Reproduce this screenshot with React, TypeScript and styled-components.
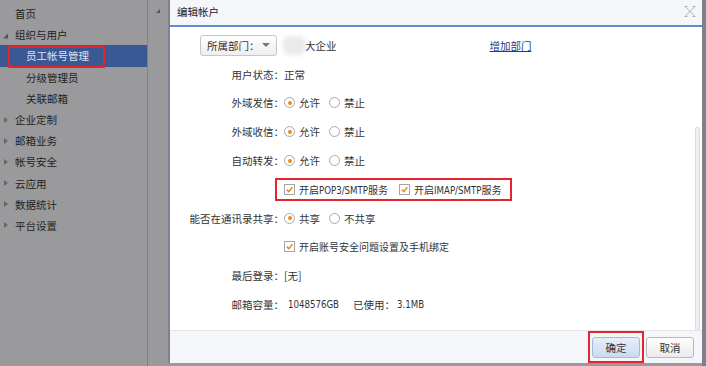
import React from "react";
import styled, { createGlobalStyle } from "styled-components";

const Global = createGlobalStyle`
  html, body { margin: 0; padding: 0; }
  body {
    width: 706px; height: 366px; overflow: hidden;
    font-family: "Noto Sans CJK SC", "Noto Sans", "Liberation Sans", sans-serif;
    font-size: 10.5px; color: #333;
  }
`;

const Page = styled.div`
  position: relative;
  display: flex;
  width: 706px;
  height: 366px;
  background: #999a9c;
  overflow: hidden;
`;

const Sidebar = styled.nav`
  width: 147px;
  border-right: 1px solid #7f8082;
  padding-top: 3px;
  display: flex;
  flex-direction: column;
  background: #9a9a9c;
`;

const NavItem = styled.div<{ $level: number; $active?: boolean }>`
  position: relative;
  height: 21.2px;
  display: flex;
  align-items: center;
  padding-left: ${(p) => (p.$level === 0 ? 15 : 26)}px;
  background: ${(p) => (p.$active ? "#3a5893" : "transparent")};
  color: ${(p) => (p.$active ? "#dfe5f0" : "#222")};
  white-space: nowrap;
`;

const Caret = styled.span<{ $open?: boolean }>`
  position: absolute;
  left: 3px;
  top: 50%;
  transform: translateY(-50%);
  width: 0;
  height: 0;
  ${(p) =>
    p.$open
      ? `border-left: 5px solid transparent; border-bottom: 5px solid #555; margin-top: 1px;`
      : `border-top: 3.5px solid transparent; border-bottom: 3.5px solid transparent; border-left: 4px solid #666; left: 4px;`}
`;

const Annot = styled.span`
  position: absolute;
  border: 2px solid #e3262d;
  pointer-events: none;
`;

const Main = styled.div`
  flex: 1;
  position: relative;
  background: #9a9a9c;
`;

const MainCaret = styled.span`
  position: absolute;
  left: 8px;
  top: 9px;
  width: 0;
  height: 0;
  border-left: 4px solid transparent;
  border-bottom: 4px solid #555;
`;

const PageScroll = styled.div`
  width: 4px;
  background: #7e8189;
`;

const Dialog = styled.section`
  position: absolute;
  left: 168px;
  top: 0;
  width: 534px;
  height: 363px;
  box-sizing: border-box;
  border-left: 2px solid #7d8391;
  display: flex;
  flex-direction: column;
  background: #fff;
`;

const Header = styled.header`
  height: 23px;
  background: #f5f6fa;
  border-bottom: 2px solid #5d8fd0;
  display: flex;
  align-items: center;
  justify-content: space-between;
  padding: 0 6px 2px 7px;
  color: #222;
`;

const Close = styled.span`
  display: flex;
  width: 12px;
  height: 11px;
`;

const Body = styled.div`
  position: relative;
  flex: 1;
  padding-top: 4px;
  display: flex;
  flex-direction: column;
`;

const Thumb = styled.span`
  position: absolute;
  right: 2px;
  top: 100px;
  width: 3px;
  height: 203px;
  background: #efefef;
  border: 1px solid #dcdcdc;
  border-radius: 2px;
`;

const TopRow = styled.div`
  height: 28.8px;
  display: flex;
  align-items: center;
  padding-left: 30px;
`;

const Select = styled.div`
  width: 77px;
  height: 21px;
  box-sizing: border-box;
  border: 1px solid #c6c6c6;
  border-radius: 3px;
  background: linear-gradient(#ffffff, #eeeeee);
  display: flex;
  align-items: center;
  justify-content: space-between;
  padding: 0 6px 0 6px;
  color: #333;
`;

const SelArrow = styled.span`
  width: 0;
  height: 0;
  border-left: 4px solid transparent;
  border-right: 4px solid transparent;
  border-top: 4px solid #777;
`;

const Blur = styled.span`
  width: 22px;
  height: 19px;
  margin-left: 6px;
  background: #eaeaea;
  border-radius: 6px;
  filter: blur(2px);
`;

const Org = styled.span`
  color: #333;
`;

const Link = styled.a`
  margin-left: 153px;
  color: #1c3c8c;
  text-decoration: underline;
`;

const Row = styled.div`
  height: 28.8px;
  display: grid;
  grid-template-columns: 114px auto;
  align-items: center;
`;

const Label = styled.span`
  text-align: right;
  white-space: nowrap;
  color: #333;
`;

const Value = styled.span<{ $indent?: number }>`
  display: flex;
  align-items: center;
  white-space: nowrap;
  padding-left: ${(p) => p.$indent ?? 0}px;
`;

const Lat = styled.span<{ $ml?: number }>`
  font-family: "DejaVu Sans Condensed", "DejaVu Sans", sans-serif;
  font-stretch: condensed;
  font-size: 9.6px;
  margin-left: ${(p) => p.$ml ?? 0}px;
`;

const Spaced = styled.span<{ $ml?: number }>`
  margin-left: ${(p) => p.$ml ?? 0}px;
`;

const Opt = styled.label<{ $gap?: number }>`
  display: inline-flex;
  align-items: center;
  gap: 4px;
  margin-right: ${(p) => p.$gap ?? 9}px;
`;

const CheckText = styled.span`
  font-size: 10px;
`;

const RadioDot = styled.span<{ $on?: boolean }>`
  width: 9px;
  height: 9px;
  border-radius: 50%;
  border: 1px solid #a9a9a9;
  background: #fff;
  display: inline-flex;
  align-items: center;
  justify-content: center;
  &::after {
    content: "";
    width: 4px;
    height: 4px;
    border-radius: 50%;
    background: ${(p) => (p.$on ? "#ef8b12" : "transparent")};
  }
`;

const Box = styled.span`
  width: 9px;
  height: 9px;
  border: 1px solid #a5a5a5;
  background: #fff;
  display: inline-flex;
`;

const CheckGroup = styled.span`
  position: relative;
  display: inline-flex;
  align-items: center;
  height: 19px;
  margin-left: -9px;
  padding: 0 9px 0 7px;
  border: 2px solid #e3262d;
`;

const Footer = styled.footer`
  position: relative;
  height: 32px;
  background: #f5f6fa;
  border-top: 1px solid #e2e4e9;
  display: flex;
  align-items: center;
  justify-content: flex-end;
  gap: 6px;
  padding-right: 8px;
`;

const Btn = styled.button<{ $primary?: boolean }>`
  position: relative;
  width: 48px;
  height: 21px;
  border-radius: 3px;
  font: inherit;
  color: #333;
  padding: 0;
  border: 1px solid ${(p) => (p.$primary ? "#a3bad8" : "#b9b9b9")};
  background: ${(p) =>
    p.$primary
      ? "linear-gradient(#e6eef9, #c9dbf1)"
      : "linear-gradient(#fdfdfd, #ebebeb)"};
`;

const Check = () => (
  <Box>
    <svg width="9" height="9" viewBox="0 0 9 9">
      <path d="M1.8 4.6 L3.8 6.6 L7.4 2.2" fill="none" stroke="#e8891a" strokeWidth="1.5" />
    </svg>
  </Box>
);

const Radio = ({ on, text, gap }: { on?: boolean; text: string; gap?: number }) => (
  <Opt $gap={gap}>
    <RadioDot $on={on} />
    {text}
  </Opt>
);

const nav: { t: string; level: number; open?: boolean; caret?: boolean; active?: boolean }[] = [
  { t: "首页", level: 0 },
  { t: "组织与用户", level: 0, caret: true, open: true },
  { t: "员工帐号管理", level: 1, active: true },
  { t: "分级管理员", level: 1 },
  { t: "关联邮箱", level: 1 },
  { t: "企业定制", level: 0, caret: true },
  { t: "邮箱业务", level: 0, caret: true },
  { t: "帐号安全", level: 0, caret: true },
  { t: "云应用", level: 0, caret: true },
  { t: "数据统计", level: 0, caret: true },
  { t: "平台设置", level: 0, caret: true },
];

const allowRows = ["外域发信：", "外域收信：", "自动转发："];

export default function App() {
  return (
    <>
      <Global />
      <Page>
        <Sidebar>
          {nav.map((n) => (
            <NavItem key={n.t} $level={n.level} $active={n.active}>
              {n.caret && <Caret $open={n.open} />}
              {n.t}
              {n.active && <Annot style={{ left: 8, top: 1, width: 93, height: 18 }} />}
            </NavItem>
          ))}
        </Sidebar>
        <Main>
          <MainCaret />
        </Main>
        <PageScroll />
        <Dialog>
          <Header>
            <span>编辑帐户</span>
            <Close>
              <svg width="12" height="11" viewBox="0 0 12 11">
                <path d="M1.5 1 L10.5 10 M10.5 1 L1.5 10 M0.5 0.5 H3.5 M8.5 0.5 H11.5 M0.5 10.5 H3.5 M8.5 10.5 H11.5" stroke="#a4a7ad" strokeWidth="0.9" fill="none" />
              </svg>
            </Close>
          </Header>
          <Body>
            <TopRow>
              <Select>
                所属部门：
                <SelArrow />
              </Select>
              <Blur />
              <Org>大企业</Org>
              <Link>增加部门</Link>
            </TopRow>
            <Row>
              <Label>用户状态：</Label>
              <Value>正常</Value>
            </Row>
            {allowRows.map((l) => (
              <Row key={l}>
                <Label>{l}</Label>
                <Value>
                  <Radio on text="允许" />
                  <Radio text="禁止" />
                </Value>
              </Row>
            ))}
            <Row>
              <Label />
              <Value>
                <CheckGroup>
                  <Opt $gap={11}>
                    <Check />
                    <CheckText>
                      开启<Lat>POP3/SMTP</Lat>服务
                    </CheckText>
                  </Opt>
                  <Opt $gap={0}>
                    <Check />
                    <CheckText>
                      开启<Lat>IMAP/SMTP</Lat>服务
                    </CheckText>
                  </Opt>
                </CheckGroup>
              </Value>
            </Row>
            <Row>
              <Label>能否在通讯录共享：</Label>
              <Value>
                <Radio on text="共享" />
                <Radio text="不共享" />
              </Value>
            </Row>
            <Row>
              <Label />
              <Value>
                <Opt>
                  <Check />
                  <CheckText>开启账号安全问题设置及手机绑定</CheckText>
                </Opt>
              </Value>
            </Row>
            <Row>
              <Label>最后登录：</Label>
              <Value>[无]</Value>
            </Row>
            <Row>
              <Label>邮箱容量：</Label>
              <Value $indent={4}>
                <Lat>1048576GB</Lat>
                <Spaced $ml={14}>已使用：</Spaced>
                <Lat $ml={2}>3.1MB</Lat>
              </Value>
            </Row>
            <Thumb />
          </Body>
          <Footer>
            <Btn $primary>
              确定
              <Annot style={{ left: -5, top: -7, width: 52, height: 28 }} />
            </Btn>
            <Btn>取消</Btn>
          </Footer>
        </Dialog>
      </Page>
    </>
  );
}
